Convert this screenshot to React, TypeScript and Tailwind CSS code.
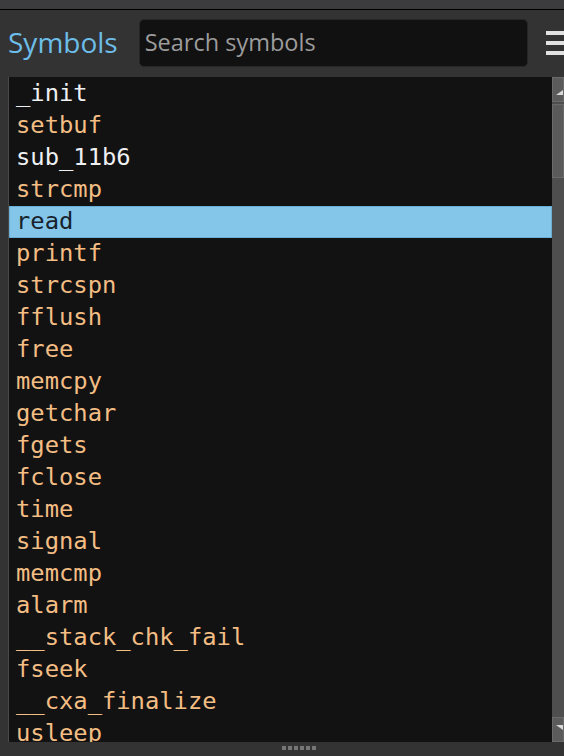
import React from "react";

const symbols: { name: string; local?: boolean }[] = [
  { name: "_init", local: true },
  { name: "setbuf" },
  { name: "sub_11b6", local: true },
  { name: "strcmp" },
  { name: "read" },
  { name: "printf" },
  { name: "strcspn" },
  { name: "fflush" },
  { name: "free" },
  { name: "memcpy" },
  { name: "getchar" },
  { name: "fgets" },
  { name: "fclose" },
  { name: "time" },
  { name: "signal" },
  { name: "memcmp" },
  { name: "alarm" },
  { name: "__stack_chk_fail" },
  { name: "fseek" },
  { name: "__cxa_finalize" },
  { name: "usleep" },
];

const selected = "read";

const App: React.FC = () => {
  return (
    <div className="w-[564px] h-[756px] overflow-hidden flex flex-col bg-[#333333] font-['Open_Sans',sans-serif]">
      {/* top strip */}
      <div className="h-[9px] bg-[#3c3c3f] border-b border-black shrink-0 box-content" />

      {/* header */}
      <div className="h-[67px] shrink-0 flex items-center pl-2 pr-0 gap-[21px]">
        <span className="text-[28px] leading-none text-[#6dbde9] -mt-[3px]">Symbols</span>
        <div className="flex-1 flex items-center gap-[18px] -mt-[2px]">
          <div className="flex-1 h-[48px] rounded-[5px] bg-[#111111] border border-[#262626] flex items-center pl-[5px]">
            <span className="text-[23.5px] leading-none text-[#9c9c9c] mt-[1px]">Search symbols</span>
          </div>
          <div className="w-[18px] flex flex-col gap-[6px]">
            <div className="h-[4px] bg-[#e2e2e2]" />
            <div className="h-[4px] bg-[#e2e2e2]" />
            <div className="h-[4px] bg-[#e2e2e2]" />
          </div>
        </div>
      </div>

      {/* list */}
      <div className="flex-1 min-h-0 ml-[8px] flex border-l border-[#4a4a4a] bg-[#121212]">
        <div className="flex-1 min-h-0 overflow-hidden pt-[1px] font-['DejaVu_Sans_Mono',monospace] text-[23.8px]">
          {symbols.map((s) => {
            const isSel = s.name === selected;
            return (
              <div
                key={s.name}
                className={
                  "h-[32px] flex items-center leading-none " +
                  (isSel
                    ? "bg-[#84c6ea] border border-[#6aaed6] text-[#17222c] pl-[6px]"
                    : s.local
                    ? "text-[#eef0f2] pl-[7px]"
                    : "text-[#f3bd84] pl-[7px]")
                }
              >
                {s.name}
              </div>
            );
          })}
        </div>
        {/* scrollbar */}
        <div className="w-[12px] bg-[#4e4e4e] flex flex-col">
          <div className="h-[25px] bg-[#5b5b5b] border border-[#6a6a6a] flex items-end justify-end pb-[6px]">
            <svg width="7" height="5" viewBox="0 0 7 5">
              <polygon points="7,0 7,5 0,5" fill="#d8d8d8" />
            </svg>
          </div>
          <div className="mt-[2px] h-[74px] bg-[#5a5a5a] border border-[#6a6a6a]" />
          <div className="flex-1" />
          <div className="h-[25px] bg-[#5b5b5b] border border-[#6a6a6a] flex items-start justify-end pt-[7px]">
            <svg width="7" height="5" viewBox="0 0 7 5">
              <polygon points="0,0 7,0 7,5" fill="#d8d8d8" />
            </svg>
          </div>
        </div>
      </div>

      {/* bottom grip */}
      <div className="h-[14px] shrink-0 bg-[#333333] flex justify-center pt-[4px]">
        <div className="flex gap-[2px] ml-[34px]">
          {[0, 1, 2, 3, 4, 5].map((i) => (
            <div key={i} className="w-[4px] h-[4px] bg-[#767676]" />
          ))}
        </div>
      </div>
    </div>
  );
};

export default App;
